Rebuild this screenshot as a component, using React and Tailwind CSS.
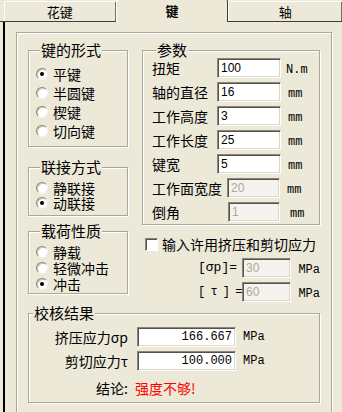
const cjk = "font-['Noto_Sans_CJK_SC',sans-serif]";
const mono = "font-['Liberation_Mono',monospace]";

const etched =
  'border border-[#ACA899] shadow-[inset_1px_1px_0_#ffffff,1px_1px_0_#ffffff]';
const sunken =
  'border border-t-[#8A877A] border-l-[#8A877A] border-r-white border-b-white shadow-[inset_1px_1px_0_#55534B,inset_-1px_-1px_0_#DAD7C8]';

function Group({ title, className = '', children }) {
  return (
    <fieldset className={`${etched} ${className}`}>
      <legend className="ml-[4px] px-[1px] bg-[#ECE9D8] text-[15px] leading-[16px]">{title}</legend>
      {children}
    </fieldset>
  );
}

function Radio({ checked, label, h }) {
  return (
    <div className={`flex items-center ${h}`}>
      <span className="flex items-center justify-center w-[12px] h-[12px] rounded-full bg-white border border-t-[#8A877A] border-l-[#8A877A] border-r-[#F4F3EE] border-b-[#F4F3EE] shadow-[inset_1px_1px_0_#C9C6B8]">
        {checked && <span className="w-[4px] h-[4px] rounded-full bg-black" />}
      </span>
      <span className="ml-[5px] text-[14px] leading-[14px] whitespace-nowrap">{label}</span>
    </div>
  );
}

function Field({ value, disabled, w = 'w-[64px]', align = 'text-left', font = "font-['Liberation_Sans',sans-serif]" }) {
  return (
    <div
      className={`${w} h-[20px] flex items-center px-[3px] ${sunken} ${font} text-[12px] ${align} ${
        disabled ? 'bg-[#F4F3EE] text-[#ACA899]' : 'bg-white text-black'
      }`}
    >
      <span className="w-full">{value}</span>
    </div>
  );
}

function ParamRow({ label, value, unit, disabled, lw = 'w-[65px]', fw = 'w-[64px]', um = 'ml-[7px]' }) {
  return (
    <div className="flex items-center h-[24px]">
      <span className={`${lw} text-[14px] leading-[16px] whitespace-nowrap`}>{label}</span>
      <Field value={value} disabled={disabled} w={fw} />
      <span className={`${mono} text-[12px] pt-[4px] ${um}`}>{unit}</span>
    </div>
  );
}

function ResultRow({ label, value }) {
  return (
    <div className="flex items-center h-[24px]">
      <span className="w-[101px] pr-[2px] text-right text-[14px] leading-[16px] whitespace-nowrap">{label}</span>
      <div className="ml-[7px]">
        <Field value={value} w="w-[99px]" align="text-right" font={mono} />
      </div>
      <span className={`${mono} text-[12px] ml-[7px]`}>MPa</span>
    </div>
  );
}

export default function App() {
  return (
    <div className={`w-[342px] h-[412px] overflow-hidden bg-[#ECE9D8] text-black ${cjk}`}>
      {/* tabs */}
      <div className="flex items-end h-[22px] pl-[4px] border-b border-[#3F3E39]">
        <div className="w-[113px] h-[20px] flex items-center justify-center border-t border-l border-r border-t-white border-l-white border-r-[#716F64] rounded-t-[2px] text-[13px]">
          花键
        </div>
        <div className="w-[114px] h-[23px] -mb-px bg-[#ECE9D8] flex items-center justify-center border-t border-l border-r border-t-white border-l-white border-r-[#3F3E39] rounded-t-[3px] text-[13px] font-bold">
          键
        </div>
        <div className="w-[115px] h-[20px] flex items-center justify-center border-t border-l border-r border-t-white border-l-white border-r-[#716F64] rounded-t-[2px] text-[13px]">
          轴
        </div>
      </div>

      {/* panel */}
      <div className="ml-[3px] border-l-[2px] border-black pl-[11px] pt-[10px]">
        <div className={`w-[316px] h-[420px] ${etched} pl-[11px] pt-[9px]`}>
          <div className="flex items-start">
            {/* left column */}
            <div className="w-[100px] flex flex-col">
              <Group title="键的形式" className="pl-[7px] pt-[6px] pb-[6px]">
                <Radio checked label="平键" h="h-[19px]" />
                <Radio label="半圆键" h="h-[19px]" />
                <Radio label="楔键" h="h-[19px]" />
                <Radio label="切向键" h="h-[19px]" />
              </Group>
              <Group title="联接方式" className="mt-[12px] pl-[7px] pt-[5px] pb-[5px]">
                <Radio label="静联接" h="h-[15px]" />
                <Radio checked label="动联接" h="h-[15px]" />
              </Group>
              <Group title="载荷性质" className="mt-[7px] pl-[7px] pt-[5px] pb-[1px]">
                <Radio label="静载" h="h-[16px]" />
                <Radio label="轻微冲击" h="h-[16px]" />
                <Radio checked label="冲击" h="h-[16px]" />
              </Group>
            </div>

            {/* right column */}
            <div className="ml-[14px] w-[178px] flex flex-col">
              <Group title="参数" className="pl-[9px]">
                <div className="-mt-[2px]">
                  <ParamRow label="扭矩" value="100" unit="N.m" um="ml-[5px]" />
                  <ParamRow label="轴的直径" value="16" unit="mm" />
                  <ParamRow label="工作高度" value="3" unit="mm" />
                  <ParamRow label="工作长度" value="25" unit="mm" />
                  <ParamRow label="键宽" value="5" unit="mm" />
                  <ParamRow label="工作面宽度" value="20" unit="mm" disabled lw="w-[75px]" fw="w-[53px]" />
                  <ParamRow label="倒角" value="1" unit="mm" disabled lw="w-[76px]" fw="w-[52px]" um="ml-[10px]" />
                </div>
              </Group>

              <div className="flex items-center h-[20px] mt-[9px] pl-[3px]">
                <span className="w-[13px] h-[13px] bg-white border border-t-[#8A877A] border-l-[#8A877A] border-r-white border-b-white shadow-[inset_1px_1px_0_#55534B]" />
                <span className="ml-[4px] text-[14px] leading-[16px] whitespace-nowrap">输入许用挤压和剪切应力</span>
              </div>

              <div className="flex items-center h-[24px] mt-[2px] pl-[56px] whitespace-nowrap">
                <span className={`w-[47px] ${mono} text-[13px]`}>[σp]=</span>
                <Field value="30" disabled w="w-[52px]" />
                <span className={`${mono} text-[12px] ml-[7px] pt-[3px]`}>MPa</span>
              </div>
              <div className="flex items-center h-[24px] whitespace-nowrap pl-[56px]">
                <span className={`w-[47px] ${mono} text-[12px] tracking-[-1px]`}>[ τ ] =</span>
                <Field value="60" disabled w="w-[52px]" />
                <span className={`${mono} text-[12px] ml-[7px] pt-[3px]`}>MPa</span>
              </div>
            </div>
          </div>

          <Group title="校核结果" className="w-[292px] mt-[1px] pt-[4px] pb-[1px]">
            <ResultRow label="挤压应力σp" value="166.667" />
            <ResultRow label="剪切应力τ" value="100.000" />
            <div className="flex items-center h-[28px] pt-[2px]">
              <span className="w-[101px] pr-[2px] text-right text-[14px] leading-[16px]">结论:</span>
              <span className="ml-[5px] text-[14px] leading-[16px] text-[#FF0000]">强度不够!</span>
            </div>
          </Group>
        </div>
      </div>
    </div>
  );
}
